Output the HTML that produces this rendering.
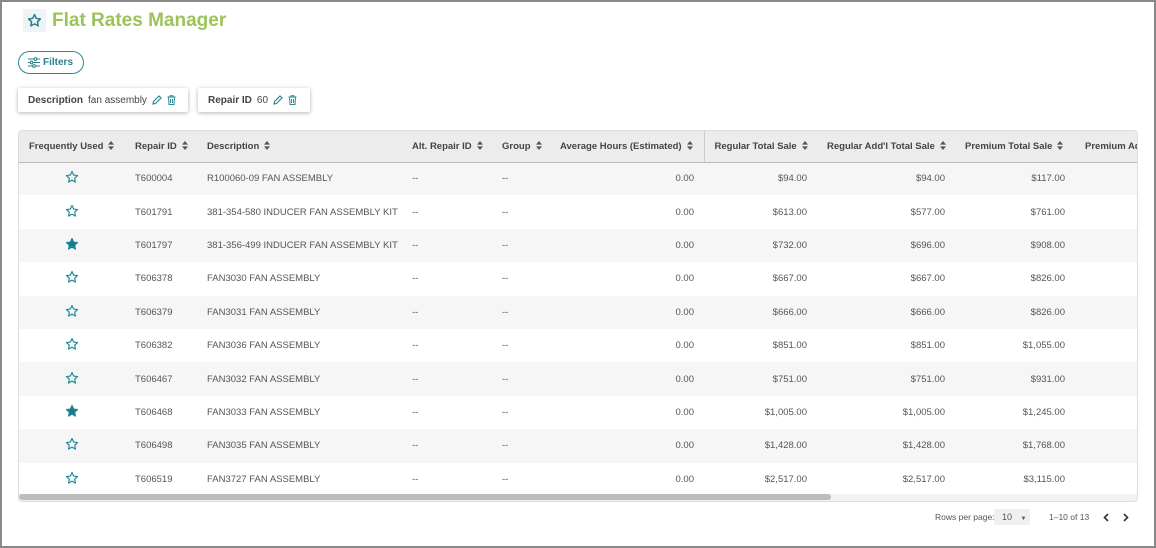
<!DOCTYPE html>
<html><head><style>
*{box-sizing:border-box;margin:0;padding:0}
body{width:1156px;height:548px;background:#fff;font-family:"Liberation Sans",sans-serif;position:relative;overflow:hidden;color:#444}
.frame{position:absolute;left:0;top:0;width:1156px;height:548px;border:2px solid #8a8a8a}
.title{position:absolute;left:23px;top:9px;display:flex;align-items:center}
.ico{width:23px;height:23px;background:#eef4f6;display:flex;align-items:center;justify-content:center;border-radius:2px}
.title h1{font-size:19px;font-weight:bold;color:#9cc35a;margin-left:6px;letter-spacing:0}
.filters{position:absolute;left:18px;top:51px;width:66px;height:23px;border:1px solid #2a8a96;border-radius:12px;font-size:10px;font-weight:bold;color:#2a7f8c;display:flex;align-items:center;padding-left:9px;gap:3px}
.chip{position:absolute;top:88px;height:24px;background:#fff;box-shadow:0 1px 4px rgba(0,0,0,.3);border-radius:2px;font-size:10px;display:flex;align-items:center;padding-left:10px;gap:5px;color:#444}
.chip b{color:#444}
.tbl{position:absolute;left:18px;top:130px;width:1120px;height:372px;border:1px solid #ddd;border-radius:4px;overflow:hidden}
table{border-collapse:collapse;table-layout:fixed;width:1200px;font-size:9.5px}
th{height:31px;background:#ececec;text-align:left;font-weight:bold;color:#444;padding-left:10px;border-bottom:1px solid #bbb;white-space:nowrap;overflow:hidden;font-size:9.5px}
td{height:33.4px;padding-left:10px;white-space:nowrap;color:#555}
tr:nth-child(odd) td{background:#f6f6f6}
td.r{text-align:right;padding-right:10px;padding-left:0}
td.c{text-align:center;padding-left:0}
.s{display:inline-block;width:6px;height:9px;margin-left:5px;vertical-align:-1px;background:
linear-gradient(#fff0,#fff0)}
.sb{position:absolute;left:0;bottom:0;width:1120px;height:7px;background:#f2f2f2}
.sb div{width:812px;height:6px;background:#bdbdbd;border-radius:3px}
.pg{position:absolute;top:512px;font-size:8.5px;color:#555}
</style></head><body>
<div class="frame"></div>
<div class="title"><div class="ico"><svg width="15" height="15" viewBox="0 0 24 24"><path d="M12 2.5l2.9 6.2 6.6.8-4.9 4.6 1.3 6.6L12 17.4l-5.9 3.3 1.3-6.6L2.5 9.5l6.6-.8z" fill="none" stroke="#1d7a87" stroke-width="2.2" stroke-linejoin="round"/></svg></div><h1>Flat Rates Manager</h1></div>
<div class="filters"><svg width="12" height="11" viewBox="0 0 12 11" fill="none" stroke="#2a7f8c" stroke-width="1"><path d="M0 2h12M0 5.5h12M0 9h12"/><circle cx="7.5" cy="2" r="1.4" fill="#fff"/><circle cx="3.5" cy="5.5" r="1.4" fill="#fff"/><circle cx="6" cy="9" r="1.4" fill="#fff"/></svg>Filters</div>
<div class="chip" style="left:18px;width:170px"><b>Description</b><span>fan assembly</span>
<svg width="10" height="10" viewBox="0 0 10 10"><path d="M1 9l.5-2.5L7 1l2 2-5.5 5.5z" fill="none" stroke="#2a8a96" stroke-width="1.2"/></svg>
<svg width="9" height="10" viewBox="0 0 9 10"><path d="M0.5 2h8M3 2V.7h3V2M1.5 2l.5 7.5h5L7.5 2M3.5 4v4M5.5 4v4" fill="none" stroke="#2a8a96" stroke-width="1"/></svg></div>
<div class="chip" style="left:198px;width:112px"><b>Repair ID</b><span>60</span>
<svg width="10" height="10" viewBox="0 0 10 10"><path d="M1 9l.5-2.5L7 1l2 2-5.5 5.5z" fill="none" stroke="#2a8a96" stroke-width="1.2"/></svg>
<svg width="9" height="10" viewBox="0 0 9 10"><path d="M0.5 2h8M3 2V.7h3V2M1.5 2l.5 7.5h5L7.5 2M3.5 4v4M5.5 4v4" fill="none" stroke="#2a8a96" stroke-width="1"/></svg></div>
<div class="tbl"><table>
<colgroup><col style="width:106px"><col style="width:72px"><col style="width:205px"><col style="width:90px"><col style="width:58px"><col style="width:154px"><col style="width:113px"><col style="width:138px"><col style="width:120px"><col style="width:144px"></colgroup>
<thead><tr id="hr"><th>Frequently Used</th><th>Repair ID</th><th>Description</th><th>Alt. Repair ID</th><th>Group</th><th style="border-right:1px solid #ccc">Average Hours (Estimated)</th><th>Regular Total Sale</th><th>Regular Add'l Total Sale</th><th>Premium Total Sale</th><th>Premium Add'l Total Sale</th></tr></thead>
<tbody id="tb"></tbody></table>
<div class="sb"><div></div></div></div>
<div class="pg" style="left:935px">Rows per page:</div>
<div style="position:absolute;left:994px;top:509px;width:36px;height:16px;background:#f0f0f0;font-size:9px;color:#555;padding:3px 0 0 8px">10 <span style="font-size:6px;margin-left:6px">▼</span></div>
<div class="pg" style="left:1049px">1–10 of 13</div>
<svg style="position:absolute;left:1103px;top:513px" width="6" height="9" viewBox="0 0 6 9"><path d="M5 1L1.5 4.5 5 8" fill="none" stroke="#333" stroke-width="1.6"/></svg>
<svg style="position:absolute;left:1123px;top:513px" width="6" height="9" viewBox="0 0 6 9"><path d="M1 1l3.5 3.5L1 8" fill="none" stroke="#333" stroke-width="1.6"/></svg>
<script>
var sort='<svg style="margin-left:5px;vertical-align:-1px" width="6" height="9" viewBox="0 0 6 9"><path d="M3 0L6 3.6H0zM3 9L0 5.4h6z" fill="#555"/></svg>';
var ths=document.querySelectorAll("#hr th");for(var i=0;i<9;i++)ths[i].innerHTML+=sort;
var d=[[0,"T600004","R100060-09 FAN ASSEMBLY","$94.00","$94.00","$117.00"],[0,"T601791","381-354-580 INDUCER FAN ASSEMBLY KIT","$613.00","$577.00","$761.00"],[1,"T601797","381-356-499 INDUCER FAN ASSEMBLY KIT","$732.00","$696.00","$908.00"],[0,"T606378","FAN3030 FAN ASSEMBLY","$667.00","$667.00","$826.00"],[0,"T606379","FAN3031 FAN ASSEMBLY","$666.00","$666.00","$826.00"],[0,"T606382","FAN3036 FAN ASSEMBLY","$851.00","$851.00","$1,055.00"],[0,"T606467","FAN3032 FAN ASSEMBLY","$751.00","$751.00","$931.00"],[1,"T606468","FAN3033 FAN ASSEMBLY","$1,005.00","$1,005.00","$1,245.00"],[0,"T606498","FAN3035 FAN ASSEMBLY","$1,428.00","$1,428.00","$1,768.00"],[0,"T606519","FAN3727 FAN ASSEMBLY","$2,517.00","$2,517.00","$3,115.00"]];
var h="";d.forEach(function(r){var st='<svg width="14" height="14" viewBox="0 0 24 24"><path d="M12 2.5l2.9 6.2 6.6.8-4.9 4.6 1.3 6.6L12 17.4l-5.9 3.3 1.3-6.6L2.5 9.5l6.6-.8z" fill="'+(r[0]?'#1d7a87':'none')+'" stroke="#1d8a96" stroke-width="2" stroke-linejoin="round"/></svg>';
h+='<tr><td class="c">'+st+'</td><td>'+r[1]+'</td><td>'+r[2]+'</td><td>--</td><td>--</td><td class="r">0.00</td><td class="r">'+r[3]+'</td><td class="r">'+r[4]+'</td><td class="r">'+r[5]+'</td><td></td></tr>';});
document.getElementById("tb").innerHTML=h;
</script>
</body></html>
